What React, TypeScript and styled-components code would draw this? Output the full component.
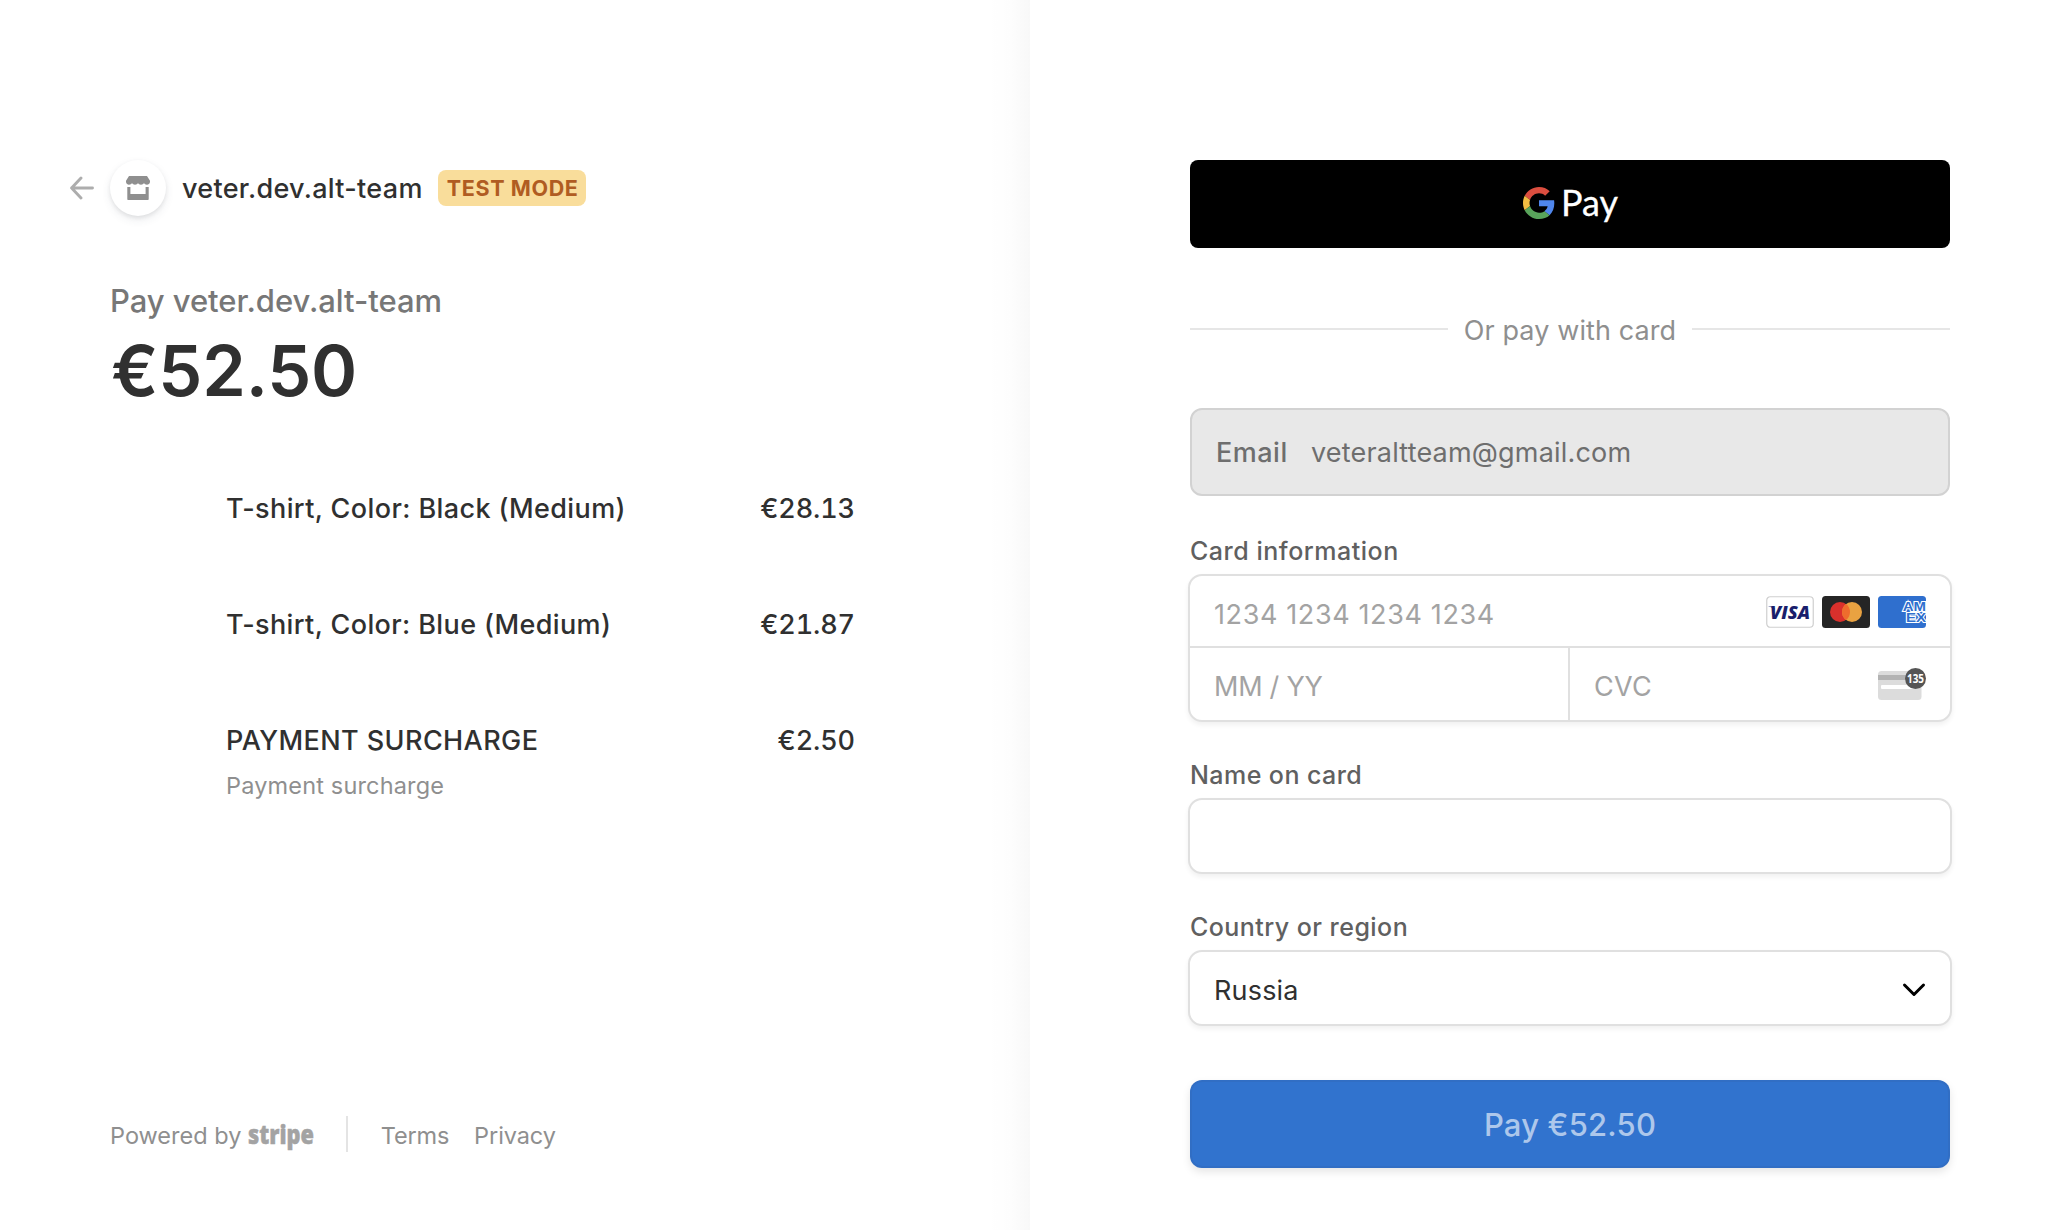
import React from 'react';
import styled, { createGlobalStyle } from 'styled-components';

const GlobalStyle = createGlobalStyle`
  *, *::before, *::after { box-sizing: border-box; }
  body { margin: 0; background: #fff; font-family: Inter, "Liberation Sans", sans-serif; }
`;

const Text = styled.span<{ $spacing?: number }>`
  white-space: nowrap;
  letter-spacing: ${({ $spacing = 0 }) => $spacing}px;
`;

const Page = styled.div`
  display: grid;
  grid-template-columns: 1030px 1fr;
  height: 1230px;
  overflow: hidden;
`;

/* ---------- order summary ---------- */

const Summary = styled.section`
  display: flex;
  flex-direction: column;
  padding: 160px 175px 78px 110px;
  background: linear-gradient(to right, rgba(0, 0, 0, 0) 0%, rgba(0, 0, 0, 0.008) 55%, rgba(0, 0, 0, 0.026) 100%) right / 44px 100% no-repeat;
`;

const Header = styled.header`
  display: flex;
  align-items: center;
  height: 56px;
  margin-left: -40px;
`;

const BackArrow = styled.svg`
  width: 24px;
  height: 24px;
  margin-right: 16px;
`;

const StoreBadge = styled.div`
  display: flex;
  align-items: center;
  justify-content: center;
  width: 56px;
  height: 56px;
  border-radius: 50%;
  background: #fff;
  box-shadow: 0 4px 10px rgba(60, 66, 87, 0.09), 0 2px 4px rgba(0, 0, 0, 0.08);
`;

const Merchant = styled(Text)`
  margin-left: 16px;
  padding-top: 1px;
  color: #303030;
  font-size: 27px;
  font-weight: 500;
  line-height: 36px;
`;

const TestMode = styled(Text)`
  display: flex;
  align-items: center;
  justify-content: center;
  width: 148px;
  height: 36px;
  margin-left: 15.5px;
  padding: 0 0 0 1px;
  border-radius: 8px;
  background: #f9dd9b;
  color: #b05c22;
  font-size: 21.5px;
  font-weight: 700;
  line-height: 34px;
`;

const PayTitle = styled.h1`
  margin: 65px 0 0;
  color: #777;
  font-size: 31px;
  font-weight: 500;
  line-height: 40px;
  letter-spacing: -0.05px;
`;

const Total = styled.div`
  margin: 10px 0 0 1px;
  color: #303030;
  font-size: 70px;
  font-weight: 600;
  line-height: 80px;
  letter-spacing: -0.15px;
`;

const Items = styled.ul`
  margin: 80px 0 0 116px;
  padding: 0;
  list-style: none;
`;

const Item = styled.li`
  height: 116px;
`;

const ItemLine = styled.div`
  display: flex;
  justify-content: space-between;
  color: #303030;
  font-size: 27px;
  font-weight: 500;
  line-height: 36px;
`;

const Price = styled(Text)`
  font-variant-numeric: tabular-nums;
`;

const ItemNote = styled.div`
  margin-top: 9px;
  color: #8f8f8f;
  font-size: 23.5px;
  line-height: 36px;
  letter-spacing: 0.16px;
`;

const Footer = styled.footer`
  display: flex;
  align-items: center;
  height: 36px;
  margin-top: auto;
  color: #8f8f8f;
  font-size: 23.5px;
  line-height: 36px;
`;

const FooterText = styled(Text)`
  padding-top: 4px;
`;

const StripeMark = styled.svg`
  width: 68px;
  height: 40px;
  margin-left: 6px;
  fill: #a3a3a3;
  overflow: visible;
`;

const FooterRule = styled.div`
  width: 2px;
  height: 36px;
  margin: 0 32.5px 0 31px;
  background: #e4e4e4;
`;

const FooterLink = styled(FooterText).attrs({ as: 'a' })`
  & + & { margin-left: 25px; }
`;

/* ---------- payment form ---------- */

const Payment = styled.main`
  display: flex;
  flex-direction: column;
  width: 920px;
  padding: 160px 0 0 160px;
`;

const GooglePay = styled.button`
  display: flex;
  align-items: center;
  justify-content: center;
  height: 88px;
  padding: 0 0 0 3px;
  border: 0;
  border-radius: 8px;
  background: #000;
`;

const Divider = styled.div`
  display: flex;
  align-items: center;
  gap: 16px;
  height: 36px;
  margin: 63px 0 61px;
  color: #8f8f8f;
  font-size: 27px;

  &::before, &::after {
    content: '';
    flex: 1;
    height: 2px;
    background: #e6e6e6;
  }
`;

const DividerText = styled(Text)`
  padding-top: 3px;
  line-height: 36px;
`;

const EmailBox = styled.div`
  display: flex;
  align-items: center;
  height: 88px;
  margin-bottom: 39px;
  padding-left: 24px;
  border: 2px solid #d2d2d2;
  border-radius: 12px;
  background: #e8e8e8;
  color: #6e6e6e;
  font-size: 27px;
`;

const EmailLabel = styled(Text)`
  width: 95px;
  font-weight: 500;
`;

const FieldLabel = styled.label<{ $spacing: number }>`
  margin-bottom: 7px;
  color: #606060;
  font-size: 25px;
  font-weight: 500;
  line-height: 32px;
  letter-spacing: ${({ $spacing }) => $spacing}px;
`;

const FieldBox = styled.div`
  margin: 0 -2px 37px;
  border: 2px solid #e0e0e0;
  border-radius: 14px;
  background: #fff;
  box-shadow: 0 3px 5px rgba(0, 0, 0, 0.06);
  color: #303030;
  font-size: 27px;
`;

const Cell = styled.div<{ $height: number; $nudge?: number }>`
  display: flex;
  align-items: center;
  justify-content: space-between;
  height: ${({ $height }) => $height}px;
  padding: 0 24px;

  > span { padding-top: ${({ $nudge = 0 }) => $nudge}px; }
`;

const Placeholder = styled(Text)`
  color: #a3a3a3;
`;

const CardSplit = styled.div`
  display: grid;
  grid-template-columns: 378px 1fr;
  border-top: 2px solid #e0e0e0;

  > * + * { border-left: 2px solid #e0e0e0; }
`;

const Brands = styled.div`
  display: flex;
  gap: 8px;
  padding-top: 2px;
`;

const Chevron = styled.svg`
  width: 24px;
  height: 16px;
  margin-top: 3px;
`;

const Submit = styled.button`
  height: 88px;
  margin-top: 17px;
  padding: 1px 0 0;
  border: 0;
  border-radius: 12px;
  background: #3173ce;
  box-shadow: inset 0 0 0 2px rgba(50, 50, 93, 0.08), 0 4px 8px rgba(0, 0, 0, 0.1);
  color: #adc7eb;
  font: 500 31px Inter, "Liberation Sans", sans-serif;
  letter-spacing: 0.19px;
`;

const StoreIcon = () => (
  <svg width="24" height="26" viewBox="0 0 24 26" fill="#8f8f8f">
    <path d="M3 1H21L24 5.8C24.3 8.5 22.6 9.7 21 9.7C19.6 9.7 18.5 9.2 18 8.1C17.4 9.2 16.3 9.7 15 9.7C13.6 9.7 12.5 9.2 12 8.1C11.5 9.2 10.4 9.7 9 9.7C7.7 9.7 6.6 9.2 6 8.1C5.5 9.2 4.4 9.7 3 9.7C1.4 9.7 -.3 8.5 0 5.8Z" />
    <path d="M1.3 12H4.4V19H19.6V12H22.7V24C22.7 24.6 22.3 25 21.7 25H2.3C1.7 25 1.3 24.6 1.3 24Z" />
  </svg>
);

const GoogleMark = styled.svg`
  width: 32px;
  height: 32px;
  margin-bottom: 2px;
`;

const GoogleG = () => (
  <GoogleMark viewBox="0 0 48 48">
    <path fill="#DB4E3F" d="M24 9.5c3.54 0 6.71 1.22 9.21 3.6l6.85-6.85C35.9 2.38 30.47 0 24 0 14.62 0 6.51 5.38 2.56 13.22l7.98 6.19C12.43 13.72 17.74 9.5 24 9.5z" />
    <path fill="#4F86EC" d="M46.98 24.55c0-1.57-.15-3.09-.38-4.55H24v9.02h12.94c-.58 2.96-2.26 5.48-4.78 7.18l7.73 6c4.51-4.18 7.09-10.36 7.09-17.65z" />
    <path fill="#F2BD42" d="M10.53 28.59c-.48-1.45-.76-2.99-.76-4.59s.27-3.14.76-4.59l-7.98-6.19C.92 16.46 0 20.12 0 24c0 3.88.92 7.54 2.56 10.78l7.97-6.19z" />
    <path fill="#59A45B" d="M24 48c6.48 0 11.93-2.13 15.89-5.81l-7.73-6c-2.15 1.45-4.92 2.3-8.16 2.3-6.26 0-11.57-4.22-13.47-9.91l-7.98 6.19C6.51 42.62 14.62 48 24 48z" />
  </GoogleMark>
);

const PayWord = styled.svg`
  width: 60px;
  height: 50px;
  margin-left: 6px;
  fill: #fff;
  overflow: visible;
`;

const Visa = () => (
  <svg width="48" height="32" viewBox="0 0 48 32">
    <rect x=".75" y=".75" width="46.5" height="30.5" rx="3.5" fill="#fff" stroke="#cfcfcf" strokeWidth="1.2" />
    <text x="4" y="22.5" textLength="40" lengthAdjust="spacingAndGlyphs" fill="#191e6c" fontFamily="Open Sans" fontWeight="800" fontStyle="italic" fontSize="17">VISA</text>
    <path d="M2.5 10.4H7L9.2 13.8C7.6 12.2 5.2 11 2.5 10.8Z" fill="#191e6c" />
  </svg>
);

const Mastercard = () => (
  <svg width="48" height="32" viewBox="0 0 48 32">
    <rect width="48" height="32" rx="3.5" fill="#252525" />
    <circle cx="18" cy="16" r="10" fill="#d9302c" />
    <circle cx="30" cy="16" r="10" fill="#e9a241" />
    <path d="M24 8a10 10 0 0 1 0 16a10 10 0 0 1 0-16z" fill="#ee6c2d" />
  </svg>
);

const AmexText = styled.text`
  font: 700 13px/1 "Liberation Sans", sans-serif;
  fill: #2f6fce;
  stroke: #fff;
  stroke-width: 2px;
  paint-order: stroke;
`;

const Amex = () => (
  <svg width="48" height="32" viewBox="0 0 48 32">
    <rect width="48" height="32" rx="3.5" fill="#2f6fce" />
    <AmexText x="24.8" y="15.4" textLength="23.2" lengthAdjust="spacingAndGlyphs">AM</AmexText>
    <AmexText x="28" y="26.2" textLength="20" lengthAdjust="spacingAndGlyphs">EX</AmexText>
  </svg>
);

const CvcIcon = () => (
  <svg width="48" height="32" viewBox="0 0 48 32" overflow="visible">
    <rect y="3" width="43.5" height="29" rx="3.5" fill="#dcdcdc" />
    <rect y="7" width="30" height="5" fill="#b3b3b3" />
    <path d="M3 18a1 1 0 0 1 1-1h26c2.4 2.6 4.8 3.6 7 4H4a1 1 0 0 1-1-1z" fill="#fff" />
    <circle cx="37.5" cy="10.5" r="10.5" fill="#555" />
    <text x="29" y="15" textLength="17" lengthAdjust="spacingAndGlyphs" fill="#fff" fontFamily="Open Sans" fontWeight="700" fontSize="12.5">135</text>
  </svg>
);

const items = [
  { name: 'T-shirt, Color: Black (Medium)', price: '€28.13', spacing: 0.39 },
  { name: 'T-shirt, Color: Blue (Medium)', price: '€21.87', spacing: 0.38 },
  { name: 'PAYMENT SURCHARGE', price: '€2.50', spacing: 0.42, note: 'Payment surcharge' },
];

export default function App() {
  return (
    <>
      <GlobalStyle />
      <Page>
        <Summary>
          <Header>
            <BackArrow viewBox="0 0 24 24" fill="none" stroke="#adadad" strokeWidth="2.9" strokeLinecap="round" strokeLinejoin="round">
              <path d="M22.5 12H1.6M11 2L1.6 12L11 22" />
            </BackArrow>
            <StoreBadge><StoreIcon /></StoreBadge>
            <Merchant $spacing={0.3}>veter.dev.alt-team</Merchant>
            <TestMode $spacing={0.62}>TEST MODE</TestMode>
          </Header>
          <PayTitle>Pay veter.dev.alt-team</PayTitle>
          <Total>€52.50</Total>
          <Items>
            {items.map((item) => (
              <Item key={item.name}>
                <ItemLine>
                  <Text $spacing={item.spacing}>{item.name}</Text>
                  <Price $spacing={-0.1}>{item.price}</Price>
                </ItemLine>
                {item.note && <ItemNote>{item.note}</ItemNote>}
              </Item>
            ))}
          </Items>
          <Footer>
            <FooterText>Powered by</FooterText>
            <StripeMark viewBox="0 0 68 40">
              <text x="1" y="29.8" textLength="66" lengthAdjust="spacingAndGlyphs" fontFamily="Open Sans" fontWeight="800" fontSize="26.5" stroke="#a3a3a3" strokeWidth=".5">stripe</text>
            </StripeMark>
            <FooterRule />
            <FooterLink $spacing={-0.2}>Terms</FooterLink>
            <FooterLink $spacing={-0.1}>Privacy</FooterLink>
          </Footer>
        </Summary>

        <Payment>
          <GooglePay aria-label="Google Pay">
            <GoogleG />
            <PayWord viewBox="0 0 60 50">
              <text x="0" y="37.4" textLength="57" lengthAdjust="spacingAndGlyphs" fontFamily="Lato" fontSize="37.5" stroke="#fff" strokeWidth=".3">Pay</text>
            </PayWord>
          </GooglePay>
          <Divider><DividerText $spacing={0.1}>Or pay with card</DividerText></Divider>
          <EmailBox>
            <EmailLabel $spacing={0.5}>Email</EmailLabel>
            <Text $spacing={0.19}>veteraltteam@gmail.com</Text>
          </EmailBox>

          <FieldLabel $spacing={0.52}>Card information</FieldLabel>
          <FieldBox>
            <Cell $height={70} $nudge={6}>
              <Placeholder $spacing={0.62}>1234 1234 1234 1234</Placeholder>
              <Brands><Visa /><Mastercard /><Amex /></Brands>
            </Cell>
            <CardSplit>
              <Cell $height={72} $nudge={4}><Placeholder $spacing={-0.25}>MM / YY</Placeholder></Cell>
              <Cell $height={72} $nudge={4}><Placeholder $spacing={0.28}>CVC</Placeholder><CvcIcon /></Cell>
            </CardSplit>
          </FieldBox>

          <FieldLabel $spacing={0.44}>Name on card</FieldLabel>
          <FieldBox><Cell $height={72} /></FieldBox>

          <FieldLabel $spacing={0.46}>Country or region</FieldLabel>
          <FieldBox>
            <Cell $height={72} $nudge={4}>
              <Text $spacing={0.18}>Russia</Text>
              <Chevron viewBox="0 0 24 16" fill="none" stroke="#000" strokeWidth="3" strokeLinecap="round" strokeLinejoin="round">
                <path d="M2.5 3L12 12.5L21.5 3" />
              </Chevron>
            </Cell>
          </FieldBox>
          <Submit>Pay €52.50</Submit>
        </Payment>
      </Page>
    </>
  );
}
